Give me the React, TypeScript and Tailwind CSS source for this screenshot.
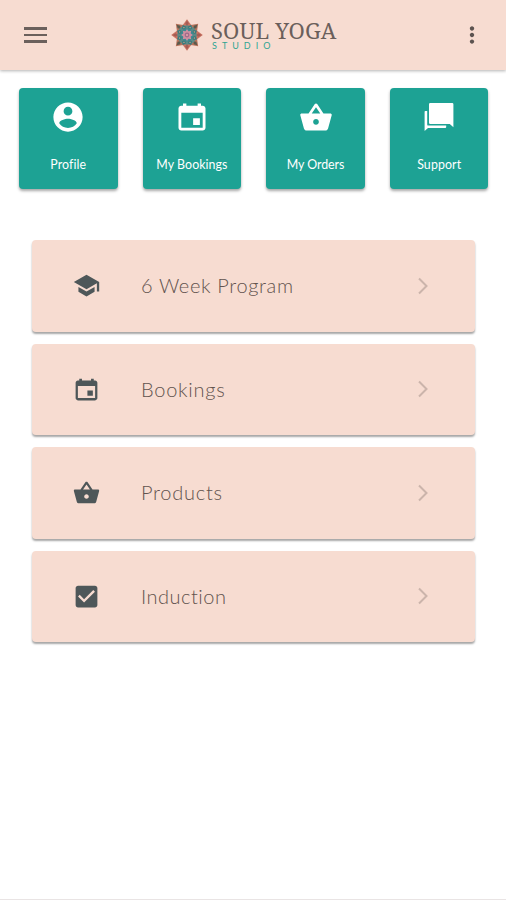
import type { ComponentType } from "react";
import {
  IoMdBasket,
  IoMdCalendar,
  IoMdCheckbox,
  IoMdContact,
  IoMdMore,
  IoMdSchool,
} from "react-icons/io";

type Item = {
  label: string;
  icon: ComponentType<{ className?: string }>;
  text: string;
};

const tiles: Item[] = [
  { label: "Profile", icon: IoMdContact, text: "tracking-[0.1px]" },
  { label: "My Bookings", icon: IoMdCalendar, text: "tracking-[0.05px]" },
  { label: "My Orders", icon: IoMdBasket, text: "tracking-[-0.05px]" },
  { label: "Support", icon: ChatIcon, text: "tracking-[0.1px]" },
];

const rows: Item[] = [
  { label: "6 Week Program", icon: IoMdSchool, text: "tracking-[0.65px]" },
  { label: "Bookings", icon: IoMdCalendar, text: "tracking-[0.75px]" },
  { label: "Products", icon: IoMdBasket, text: "tracking-[0.75px]" },
  { label: "Induction", icon: IoMdCheckbox, text: "tracking-[0.5px]" },
];

const eighths = [0, 45, 90, 135, 180, 225, 270, 315];

function ChatIcon({ className }: { className?: string }) {
  return (
    <svg className={className} viewBox="0 0 36 36" fill="currentColor" aria-hidden>
      <path d="M9.2 4h22a1.2 1.2 0 0 1 1.2 1.2V28.2L28.8 25H9.2A1.2 1.2 0 0 1 8 23.8V5.2A1.2 1.2 0 0 1 9.2 4Z" />
      <path d="M4.4 12H6.2V25.4a1.2 1.2 0 0 0 1.2 1.2H25.2V28a1 1 0 0 1-1 1H7L3.6 32V12.8a.8.8 0 0 1 .8-.8Z" />
    </svg>
  );
}

function Mandala() {
  return (
    <svg className="h-8 w-8 shrink-0" viewBox="-16 -16 32 32" aria-hidden>
      {eighths.map((a) => (
        <g key={a} transform={`rotate(${a})`}>
          <path d="M0-15.8 4.4-9.8 0-5-4.4-9.8Z" fill={a % 90 ? "#b8735c" : "#cb7362"} />
          <path d="M0-14.6 1.8-11.4 0-9-1.8-11.4Z" fill={a % 90 ? "#5a5a4c" : "#a75c54"} />
        </g>
      ))}
      <circle r="9.8" fill="#5d8a86" />
      {eighths.map((a) => (
        <g key={a} transform={`rotate(${a + 22.5})`}>
          <path d="M0-11 2.2-8 0-5-2.2-8Z" fill="#397b7d" />
          <circle cy="-8" r=".7" fill="#d29b83" />
        </g>
      ))}
      <circle r="6.4" fill="#3d8990" />
      {eighths.map((a) => (
        <path key={a} d="M0-6 1.9-3 0 0-1.9-3Z" fill="#cf8ea0" transform={`rotate(${a})`} />
      ))}
      <circle r="2.4" fill="#a06c8c" />
      <circle r="1" fill="#e5aaa8" />
    </svg>
  );
}

function Header() {
  return (
    <header className="flex h-[70px] shrink-0 items-center bg-[#f7dcd1] pr-[20px] pl-6 shadow-[0_1px_3px_rgba(0,0,0,0.3)]">
      <div className="flex w-[23px] flex-col gap-[4px]">
        <span className="h-[2.5px] bg-[#6b605c]" />
        <span className="h-[2.5px] bg-[#6b605c]" />
        <span className="h-[2.5px] bg-[#6b605c]" />
      </div>
      <div className="ml-[124px] flex items-center gap-2">
        <Mandala />
        <div>
          <p className="font-['Noto_Serif','Liberation_Serif',serif] text-[22px] leading-[20px] tracking-[0.15px] whitespace-nowrap text-[#6b5f5b]">
            SOUL YOGA
          </p>
          <p className="mt-[2px] pl-px font-['Lato',sans-serif] text-[9px] leading-[8px] tracking-[5px] text-[#2fa592]">
            STUDIO
          </p>
        </div>
      </div>
      <IoMdMore className="ml-auto h-7 w-7 text-[#5c5350]" />
    </header>
  );
}

export default function App() {
  return (
    <div className="flex h-[900px] w-[506px] flex-col overflow-hidden border-b border-[#e9e4e4] bg-white font-['Lato',sans-serif]">
      <Header />

      <nav className="mt-[18px] flex justify-between pr-[17.5px] pl-[19px]">
        {tiles.map(({ label, icon: Icon, text }) => (
          <button
            key={label}
            className="flex h-[101px] w-[98.5px] flex-col items-center rounded-[4px] bg-[#1da294] pt-[11px] text-white shadow-[0_2px_3px_rgba(0,0,0,0.35)]"
          >
            <Icon className="h-9 w-9" />
            <span className={`mt-[21px] text-[12.4px] leading-[18px] whitespace-nowrap ${text}`}>{label}</span>
          </button>
        ))}
      </nav>

      <main className="mt-[51px] flex flex-col gap-3 pr-[31px] pl-8">
        {rows.map(({ label, icon: Icon, text }) => (
          <button
            key={label}
            className="flex h-[91.5px] items-center rounded-[4px] bg-[#f7dcd1] pr-[46px] pl-[40px] text-left shadow-[0_2px_2px_rgba(0,0,0,0.35)]"
          >
            <Icon className="h-[29px] w-[29px] text-[#4e5759]" />
            <span className={`ml-[40px] pb-px text-[20px] leading-6 font-light text-[#62534e] ${text}`}>{label}</span>
            <svg className="ml-auto h-[18px] w-[12px]" viewBox="0 0 12 18" fill="none" stroke="#cbb4ab" strokeWidth="2">
              <path d="m2 1.5 7.5 7.5L2 16.5" />
            </svg>
          </button>
        ))}
      </main>
    </div>
  );
}
